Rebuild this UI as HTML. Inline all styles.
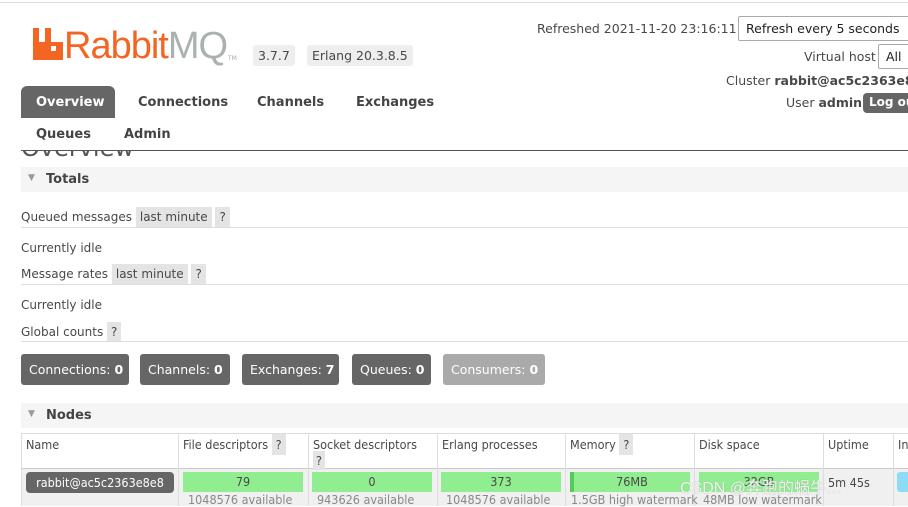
<!DOCTYPE html>
<html><head><meta charset="utf-8"><style>
*{margin:0;padding:0;box-sizing:border-box}
body{width:908px;height:506px;overflow:hidden;background:#fff;font-family:"DejaVu Sans","Liberation Sans",sans-serif;font-size:12px;color:#484848;position:relative}
.a{position:absolute;white-space:nowrap}
.pill{background:#eee;border-radius:3px;padding:3px 5px}
.tab{font-weight:bold;font-size:13px;color:#444}
.hl{background:#e4e4e4;padding:3px 4px}
.line{position:absolute;left:21px;right:0;height:1px;background:#ddd}
.box{position:absolute;top:354px;height:31px;background:#666;color:#fff;border-radius:3px;font-size:12.5px;line-height:31px;padding:0 8px;white-space:nowrap}
.box b{font-weight:bold}
.cond{font-family:"DejaVu Sans Condensed","DejaVu Sans",sans-serif}
.g{position:absolute;top:472px;height:20px;background:#90ee90;text-align:center;line-height:20px;color:#484848}
.sub{position:absolute;top:492px;color:#888}
.vl{position:absolute;top:434px;width:1px;height:72px;background:#ddd}
</style></head><body>
<div style="position:absolute;left:0;right:0;top:2px;height:1px;background:#ddd"></div>
<svg class="a" style="left:33px;top:28px" width="30" height="32"><path d="M0 0h6v14h6V0h6v14h12v18H0z" fill="#f26522"/><rect x="18" y="18" width="5" height="5" fill="#fff"/></svg>
<div class="a" style="left:64px;top:25px;font-family:'Liberation Sans',sans-serif;font-size:38px;color:#f26522;letter-spacing:-1px">Rabbit<span style="color:#a9b2b0">MQ</span></div>
<div class="a" style="left:228px;top:55px;font-size:6px;color:#aaa">TM</div>
<div class="a pill" style="left:253px;top:45px;font-size:12.5px">3.7.7</div>
<div class="a pill" style="left:307px;top:45px;font-size:12.5px">Erlang 20.3.8.5</div>
<div class="a" style="left:21px;top:86px;width:94px;height:32px;background:#666;border-radius:6px 6px 0 0"></div>
<div class="a tab" style="left:36px;top:95px;color:#fff">Overview</div>
<div class="a tab" style="left:138px;top:95px">Connections</div>
<div class="a tab" style="left:257px;top:95px">Channels</div>
<div class="a tab" style="left:356px;top:95px">Exchanges</div>
<div class="a tab" style="left:36px;top:127px">Queues</div>
<div class="a tab" style="left:124px;top:127px">Admin</div>
<div class="a" style="left:21px;top:150px;right:0;height:1px;background:#555"></div>
<div class="a" style="left:21px;top:151px;width:200px;height:15px;overflow:hidden"><div class="a" style="left:0;top:-17px;font-size:24px;color:#555">Overview</div></div>
<div class="a" style="left:537px;top:21px;font-size:12.5px">Refreshed 2021-11-20 23:16:11</div>
<div class="a" style="left:738px;top:16px;width:180px;height:25px;border:1px solid #aaa;border-radius:2px;font-size:12.5px;padding:4px 7px;color:#222">Refresh every 5 seconds</div>
<div class="a" style="left:804px;top:49px;font-size:12.5px">Virtual host</div>
<div class="a" style="left:878px;top:44px;width:40px;height:25px;border:1px solid #aaa;border-radius:2px;font-size:12.5px;padding:4px 7px;color:#222">All</div>
<div class="a" style="left:726px;top:73px;font-size:12.5px">Cluster <b>rabbit@ac5c2363e8e8</b></div>
<div class="a" style="left:786px;top:95px;font-size:12.5px">User <b>admin</b></div>
<div class="a" style="left:863px;top:93px;width:60px;height:20px;background:#666;color:#fff;border-radius:4px;font-weight:bold;font-size:12px;padding:2px 6px">Log out</div>
<div class="a" style="left:21px;top:167px;right:0;height:25px;background:#f5f5f5"></div>
<div class="a" style="left:28px;top:173px;font-size:9px;color:#999">▼</div>
<div class="a" style="left:46px;top:172px;font-weight:bold;font-size:13px;color:#444">Totals</div>
<div class="a" style="left:21px;top:210px">Queued messages <span class="hl">last minute</span> <span class="hl">?</span></div>
<div class="line" style="top:227px"></div>
<div class="a" style="left:21px;top:241px">Currently idle</div>
<div class="a" style="left:21px;top:267px">Message rates <span class="hl">last minute</span> <span class="hl">?</span></div>
<div class="line" style="top:284px"></div>
<div class="a" style="left:21px;top:298px">Currently idle</div>
<div class="a" style="left:21px;top:325px">Global counts <span class="hl">?</span></div>
<div class="line" style="top:341px"></div>
<div class="box" style="left:21px;width:108px">Connections: <b>0</b></div>
<div class="box" style="left:140px;width:90px">Channels: <b>0</b></div>
<div class="box" style="left:242px;width:97px">Exchanges: <b>7</b></div>
<div class="box" style="left:352px;width:79px">Queues: <b>0</b></div>
<div class="box" style="left:443px;width:102px;background:#aaa">Consumers: <b>0</b></div>
<div class="a" style="left:21px;top:403px;right:0;height:25px;background:#f5f5f5"></div>
<div class="a" style="left:28px;top:409px;font-size:9px;color:#999">▼</div>
<div class="a" style="left:46px;top:408px;font-weight:bold;font-size:13px;color:#444">Nodes</div>
<div class="a" style="left:21px;top:433px;right:0;height:1px;background:#ddd"></div>
<div class="a" style="left:21px;top:468px;right:0;height:38px;background:#f0f0f0;border-top:1px solid #ccc"></div>
<div class="vl" style="left:21px"></div><div class="vl" style="left:178px"></div><div class="vl" style="left:308px"></div><div class="vl" style="left:437px"></div><div class="vl" style="left:565px"></div><div class="vl" style="left:694px"></div><div class="vl" style="left:823px"></div><div class="vl" style="left:893px"></div>
<div class="cond" style="font-size:12.5px">
<div class="a" style="left:26px;top:437px">Name</div>
<div class="a" style="left:183px;top:437px">File descriptors <span class="hl">?</span></div>
<div class="a" style="left:313px;top:437px">Socket descriptors</div>
<div class="a hl" style="left:313px;top:451px;padding:2px 3px">?</div>
<div class="a" style="left:442px;top:437px">Erlang processes</div>
<div class="a" style="left:570px;top:437px">Memory <span class="hl">?</span></div>
<div class="a" style="left:699px;top:437px">Disk space</div>
<div class="a" style="left:828px;top:437px">Uptime</div>
<div class="a" style="left:898px;top:437px">In</div>
<div class="a" style="left:26px;top:472px;width:148px;height:21px;background:#666;color:#fff;border-radius:4px;text-align:center;line-height:21px">rabbit@ac5c2363e8e8</div>
<div class="g" style="left:183px;width:120px">79</div>
<div class="g" style="left:312px;width:120px">0</div>
<div class="g" style="left:441px;width:120px">373</div>
<div class="g" style="left:570px;width:120px;border-left:4px solid #5c5">76MB</div>
<div class="g" style="left:699px;width:120px">32GB</div>
<div class="a" style="left:828px;top:475px">5m 45s</div>
<div class="a" style="left:897px;top:472px;width:14px;height:20px;background:#8ddcf5;border-radius:3px"></div>
<div class="sub" style="left:188px">1048576 available</div>
<div class="sub" style="left:317px">943626 available</div>
<div class="sub" style="left:446px">1048576 available</div>
<div class="sub" style="left:571px">1.5GB high watermark</div>
<div class="sub" style="left:703px">48MB low watermark</div>
</div>
<div class="a" style="left:680px;top:474px;font-size:16px;color:rgba(255,255,255,0.85);font-family:'Liberation Sans','Noto Sans CJK SC',sans-serif;text-shadow:0 0 1px #999">CSDN @奔跑的蜗牛…</div>
</body></html>
